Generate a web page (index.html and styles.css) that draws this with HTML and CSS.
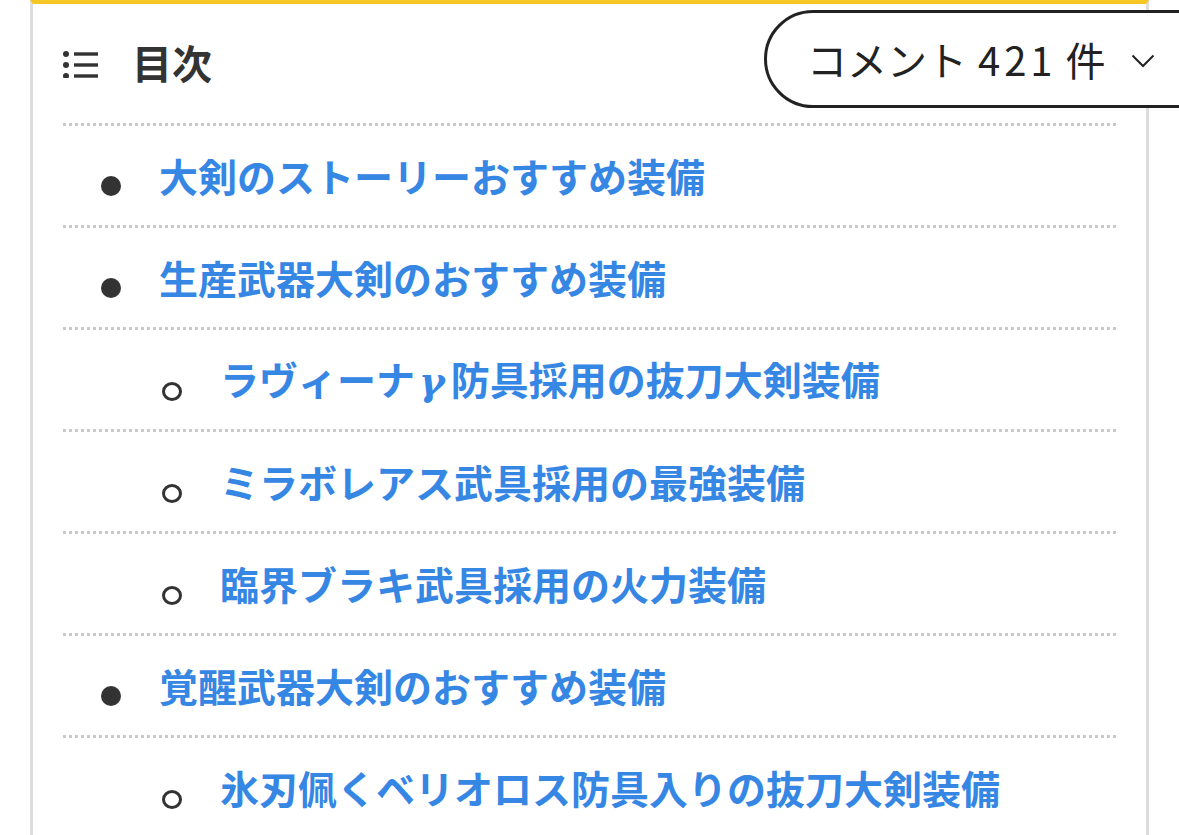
FILE: index.html
```html
<!DOCTYPE html>
<html lang="ja">
<head>
<meta charset="utf-8">
<title>目次</title>
<link rel="stylesheet" href="styles.css">
</head>
<body>
<div class="toc">
  <div class="toc-head">
    <svg class="toc-icon" width="36" height="30" viewBox="0 0 36 30">
      <circle cx="3" cy="6" r="3" fill="#333"/>
      <circle cx="3" cy="17" r="3" fill="#333"/>
      <circle cx="3" cy="28" r="3" fill="#333"/>
      <rect x="11" y="4.3" width="24" height="3.4" fill="#333"/>
      <rect x="11" y="15.3" width="24" height="3.4" fill="#333"/>
      <rect x="11" y="26.3" width="24" height="3.4" fill="#333"/>
    </svg>
    <span class="toc-title">目次</span>
  </div>
  <ul class="toc-list">
    <li class="lv1"><a href="#">大剣のストーリーおすすめ装備</a></li>
    <li class="lv1"><a href="#">生産武器大剣のおすすめ装備</a></li>
    <li class="lv2"><a href="#">ラヴィーナ<span class="greek">γ</span>防具採用の抜刀大剣装備</a></li>
    <li class="lv2"><a href="#">ミラボレアス武具採用の最強装備</a></li>
    <li class="lv2"><a href="#">臨界ブラキ武具採用の火力装備</a></li>
    <li class="lv1"><a href="#">覚醒武器大剣のおすすめ装備</a></li>
    <li class="lv2"><a href="#">氷刃佩くベリオロス防具入りの抜刀大剣装備</a></li>
  </ul>
</div>
<button class="comment-btn" type="button">
  <span class="comment-text">コメント <span class="num">421</span> 件</span>
  <svg class="chev" width="24" height="14" viewBox="0 0 24 14"><path d="M1.5 1.5 L12 12 L22.5 1.5" fill="none" stroke="#222" stroke-width="2"/></svg>
</button>
</body>
</html>
```

FILE: styles.css
```css
html, body {
  margin: 0;
  padding: 0;
  background: #fff;
  overflow: hidden;
}
body {
  font-family: "Noto Sans CJK JP", "Noto Sans", sans-serif;
  color: #333;
}
.toc {
  margin-left: 30px;
  width: 1119px;
  box-sizing: border-box;
  min-height: 835px;
  border-top: 4px solid #f6c624;
  border-left: 3px solid #ddd;
  border-right: 3px solid #ddd;
  padding: 0 29px 0 30px;
}
.toc-head {
  height: 119px;
  display: flex;
  align-items: center;
  gap: 33px;
}
.toc-icon {
  display: block;
  margin-top: -2px;
}
.toc-title {
  font-size: 40px;
  font-weight: 700;
  line-height: 1;
  color: #333;
  margin-top: -4px;
}
.toc-list {
  list-style: none;
  margin: 0;
  padding: 0;
}
.toc-list li {
  height: 102px;
  box-sizing: border-box;
  padding-top: 3px;
  display: flex;
  align-items: center;
  background-image: linear-gradient(to right, #c9c9c9 50%, transparent 50%);
  background-size: 6px 3px;
  background-repeat: repeat-x;
  background-position: 0 0;
}
.toc-list li::before {
  content: "";
  flex: none;
  box-sizing: border-box;
  border-radius: 50%;
}
.toc-list li.lv1::before {
  width: 20px;
  height: 20px;
  background: #333;
  margin: 20px 38px 0 38px;
}
.toc-list li.lv2::before {
  width: 20px;
  height: 19px;
  border: 3px solid #333;
  margin: 23px 38px 0 99px;
}
.toc-list a {
  font-size: 39px;
  font-weight: 700;
  line-height: 1;
  color: #3686e4;
  text-decoration: none;
  white-space: nowrap;
}
.greek {
  font-family: "DejaVu Serif", serif;
  font-style: italic;
  font-weight: 700;
  padding: 0 6px 0 4px;
}
.comment-btn {
  position: fixed;
  left: 764px;
  top: 10px;
  width: 480px;
  height: 98px;
  box-sizing: border-box;
  border: 3px solid #222;
  border-radius: 50px;
  background: #fff;
  padding: 0 0 0 40px;
  display: flex;
  align-items: center;
  gap: 25px;
  font-family: "Noto Sans CJK JP", "Noto Sans", sans-serif;
  cursor: pointer;
}
.comment-text {
  font-size: 40px;
  font-weight: 400;
  color: #222;
  line-height: 1;
  white-space: nowrap;
  word-spacing: 2px;
}
.num {
  letter-spacing: 4px;
  margin-right: -2px;
}
.chev {
  display: block;
  margin-top: 4px;
}
```
